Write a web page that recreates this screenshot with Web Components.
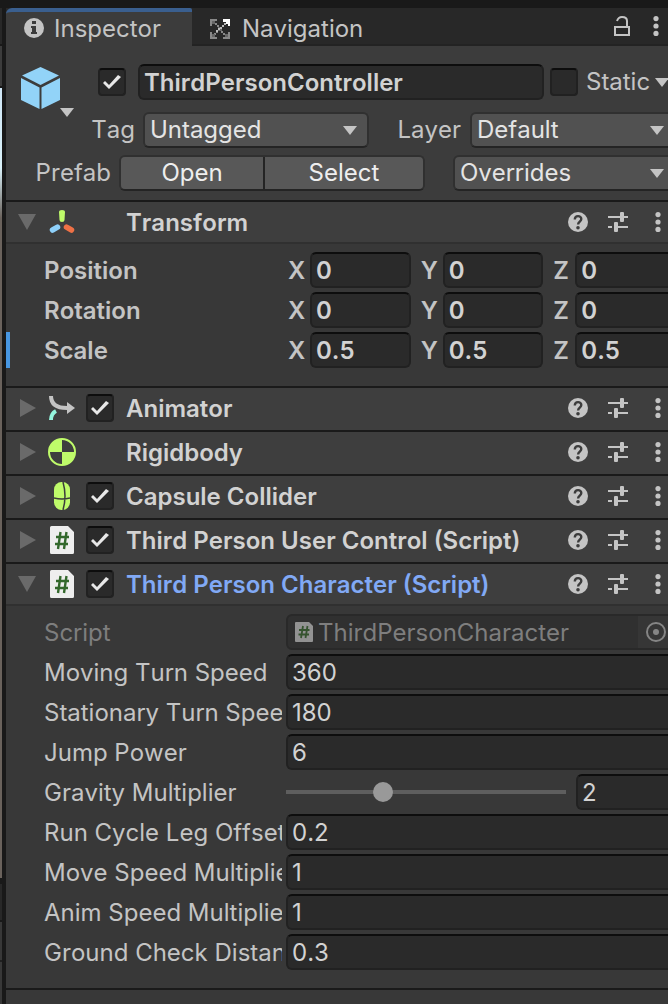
<!DOCTYPE html>
<html lang="en">
<head>
<meta charset="utf-8">
<title>Inspector</title>
<style>
  html, body { margin: 0; min-height: 100%; background: #191919; }
  body {
    display: flex;
    min-height: 100vh;
    overflow: hidden;
    font: 24px/38px Inter, "Liberation Sans", sans-serif;
    font-kerning: none;
    color: #c4c4c4;
  }
</style>
</head>
<body>
<scene-edge></scene-edge>
<inspector-panel>
  <panel-tab slot="tab" icon="info" active>Inspector</panel-tab>
  <panel-tab slot="tab" icon="nav">Navigation</panel-tab>
  <object-header></object-header>
  <component-section name="Transform" icon="transform" open>
    <vector-row label="Position" x="0" y="0" z="0"></vector-row>
    <vector-row label="Rotation" x="0" y="0" z="0"></vector-row>
    <vector-row label="Scale" x="0.5" y="0.5" z="0.5" modified></vector-row>
  </component-section>
  <component-section name="Animator" icon="animator" toggle></component-section>
  <component-section name="Rigidbody" icon="rigidbody"></component-section>
  <component-section name="Capsule Collider" icon="capsule" toggle></component-section>
  <component-section name="Third Person User Control (Script)" icon="script" toggle></component-section>
  <component-section name="Third Person Character (Script)" icon="script" toggle open linked>
    <object-row label="Script" value="ThirdPersonCharacter"></object-row>
    <value-row label="Moving Turn Speed" value="360"></value-row>
    <value-row label="Stationary Turn Speed" value="180"></value-row>
    <value-row label="Jump Power" value="6"></value-row>
    <slider-row label="Gravity Multiplier" value="2" min="1" max="4"></slider-row>
    <value-row label="Run Cycle Leg Offset" value="0.2"></value-row>
    <value-row label="Move Speed Multiplier" value="1"></value-row>
    <value-row label="Anim Speed Multiplier" value="1"></value-row>
    <value-row label="Ground Check Distance" value="0.3"></value-row>
  </component-section>
</inspector-panel>

<script>
const FIELD = `
  *, *::before { box-sizing: border-box; }
  input, button, select { font: inherit; font-kerning: inherit; color: inherit; margin: 0; letter-spacing: inherit; }
  input.text {
    display: block; width: 100%; min-width: 0; height: 36px; padding: 2px 4px 0;
    background: #2a2a2a; color: #d2d2d2;
    border: 2px solid #212121; border-top-color: #0d0d0d; border-radius: 6px; outline: none;
  }
  input.check {
    appearance: none; display: grid; place-items: center; width: 28px; height: 28px; flex: none;
    background: #2a2a2a; border: 2px solid #212121; border-top-color: #0d0d0d; border-radius: 4px;
  }
  input.check:checked::before {
    content: ""; width: 18px; height: 14px; background: #e8e8e8;
    clip-path: polygon(0 8px, 2px 6px, 6px 10px, 15px 0, 18px 2px, 6px 14px);
  }
  button.icon { display: grid; place-items: center; padding: 0; border: 0; background: none; }
  .row { display: grid; grid-template-columns: 238px minmax(0, 1fr); column-gap: 4px; height: 36px; }
  .row > label, .row > .label { overflow: hidden; white-space: nowrap; }
`;

const ICONS = {
  info: [20, 20, `<circle cx="10" cy="10" r="10" fill="#c4c4c4"/><path fill="#3c3c3c" d="M8 3h4v3H8zM7 8h5v6h1v2H7v-2h1v-4H7z"/>`],
  nav: [20, 20, `<g fill="#888"><path d="M0 0h7v2H5v2h2v2h2v2H7V6H5V4H2v3H0zM0 20v-7h2v3h2v-2h2v-2h2v2H6v2H4v2h3v2zM20 20h-7v-2h2v-2h-2v-2h-2v-2h2v2h2v2h3v-3h2z"/><path fill="#666" d="M2 2h3v3H2zM2 15h3v3H2zM15 15h3v3h-3zM8 8h4v4H8z"/></g><path fill="#fff" d="M13 0h7v7h-2V5h-2V3h-3z"/><path fill="#bbb" d="M14 4h2v2h-2v2h-2v2h-2v1H8V9h2V8h2V6h2zM6 11h2v2H6z"/>`],
  lock: [18, 20, `<path fill="none" stroke="#c4c4c4" stroke-width="2" d="M2 11h14v8H2zM14 11V5c0-3-2-4-5-4S5 2 4 5"/>`],
  more: [6, 20, `<g fill="#c4c4c4"><circle cx="3" cy="2.600" r="2.600"/><circle cx="3" cy="10" r="2.600"/><circle cx="3" cy="17.400" r="2.600"/></g>`],
  help: [20, 20, `<circle cx="10" cy="10" r="10" fill="#c4c4c4"/><path d="M6.800 7.600C6.800 3 13.300 3.200 13.300 7c0 2.600-3.200 2.600-3.200 5.500" fill="none" stroke="#3c3c3c" stroke-width="2.400"/><circle cx="10" cy="15.800" r="1.800" fill="#3c3c3c"/>`],
  preset: [20, 20, `<path fill="#c4c4c4" d="M0 4h12V1a1 1 0 0 1 1-1h2a1 1 0 0 1 1 1v3h4v2h-4v3a1 1 0 0 1-1 1h-2a1 1 0 0 1-1-1V6H0zM0 14h4v2H0zM6 11a1 1 0 0 1 1-1h2a1 1 0 0 1 1 1v3h10v2H10v3a1 1 0 0 1-1 1H7a1 1 0 0 1-1-1z"/>`],
  down: [14, 9, `<path fill="#c4c4c4" d="M0 0h14L7 9z"/>`],
  open: [18, 16, `<path fill="#6a6a6a" d="M0 0h18L9 16z"/>`],
  closed: [18, 18, `<path fill="#6a6a6a" d="M2 0v18l16-9z"/>`],
  cube: [40, 42, `<g fill="#92d3f8"><path d="M20.500 0 39 8.500 20.500 18 2 8.500z"/><path d="M1 11l18.500 9.500v21.500L1 33zM40 11l-18.500 9.500v21.500L40 33z"/></g>`],
  transform: [26, 24, `<path fill="#bffb6a" d="M10 2q0-2 3-2t3 2l-.5 8q0 2-2.500 2t-2.500-2z"/><path stroke="#8ed0fa" stroke-width="5.500" stroke-linecap="round" d="M3.500 20l5-2.800"/><path stroke="#ef7146" stroke-width="5.500" stroke-linecap="round" d="M17.500 17.200l5 2.800"/>`],
  animator: [26, 24, `<path d="M2 0c0 8 5 12 16 12" fill="none" stroke="#c4c4c4" stroke-width="4"/><path fill="#c4c4c4" d="M18 6l8 6-8 6z"/><path d="M2 24c0-4 1-7 5-9" fill="none" stroke="#94f5dd" stroke-width="4"/>`],
  rigidbody: [28, 28, `<circle cx="14" cy="14" r="13" fill="none" stroke="#bffb6a" stroke-width="2"/><path fill="#bffb6a" d="M14 14V1A13 13 0 0 0 1 14zM14 14h13a13 13 0 0 1-13 13z"/>`],
  capsule: [16, 28, `<rect width="16" height="28" rx="7.500" fill="#bffb6a"/><path d="M0 16q8 2 16 0M9 0q4 14 0 28" fill="none" stroke="#3c3c3c" stroke-width="1.500"/>`],
  script: [24, 28, `<path fill="#eee" d="M1.500 0H18l6 6v20.500a1.500 1.500 0 0 1-1.500 1.500h-21A1.500 1.500 0 0 1 0 26.500v-25A1.500 1.500 0 0 1 1.500 0z"/><path d="M10.500 6l-2.500 17M16.500 6 14 23M6 11h13M5 18h13" stroke="#33682c" stroke-width="2.400"/>`],
  scriptDim: [18, 20, `<path fill="#929292" d="M1 0h13l4 4v15a1 1 0 0 1-1 1H1a1 1 0 0 1-1-1V1a1 1 0 0 1 1-1z"/><path d="M8 4 6 16M12.500 4l-2 12M4 8h10.500M3.500 12.500H14" stroke="#35532f" stroke-width="1.800"/>`],
  picker: [20, 20, `<circle cx="10" cy="10" r="9" fill="none" stroke="#858585" stroke-width="2"/><circle cx="10" cy="10" r="3" fill="#858585"/>`]
};

class BaseElement extends HTMLElement {
  connectedCallback() {
    if (this.shadowRoot) return;
    this.attachShadow({ mode: "open" }).innerHTML = `<style>${FIELD}</style>` + this.render();
  }
  attr(name) { return this.getAttribute(name) || ""; }
}

customElements.define("ui-icon", class extends HTMLElement {
  connectedCallback() {
    if (this.shadowRoot) return;
    const [w, h, shape] = ICONS[this.getAttribute("name")];
    this.attachShadow({ mode: "open" }).innerHTML = `
      <style>:host { display: block; flex: none; line-height: 0; } svg { display: block; }</style>
      <svg width="${w}" height="${h}" viewBox="0 0 ${w} ${h}" fill="none" aria-hidden="true">${shape}</svg>`;
  }
});

customElements.define("scene-edge", class extends BaseElement {
  render() {
    return `<style>
      :host { display: flex; flex-direction: column; flex: none; width: 2px; margin-right: 4px; }
      .bar { height: 80px; margin-top: 8px; background: linear-gradient(#282828 36px, #191919 36px, #191919 38px, #3c3c3c 38px, #3c3c3c 78px, #191919 78px); }
      .view { height: 790px; background: linear-gradient(#cfe6f6, #d8f0f8 80px, #6a625c 130px, #6a625c); }
      .dock { flex: 1; background: linear-gradient(#282828 36px, #191919 36px, #191919 38px, #383838 38px, #383838 76px, #202020 76px, #202020 78px, #383838 78px); margin-top: 6px; }
    </style><div class="bar"></div><div class="view"></div><div class="dock"></div>`;
  }
});

customElements.define("inspector-panel", class extends BaseElement {
  render() {
    return `<style>
      :host { display: flex; flex-direction: column; flex: 1; min-width: 0; margin-right: -8px; background: #383838; }
      .tabs { display: flex; height: 46px; border-top: 8px solid #191919;
        background: linear-gradient(#282828 36px, #232323 36px); }
      .tools { display: flex; align-items: center; gap: 22px; margin-left: auto; padding: 0 17px 2px 0; }
    </style>
    <nav class="tabs"><slot name="tab"></slot>
      <div class="tools">
        <button class="icon" aria-label="Lock"><ui-icon name="lock"></ui-icon></button>
        <button class="icon" aria-label="Menu"><ui-icon name="more"></ui-icon></button>
      </div>
    </nav>
    <slot></slot>`;
  }
});

customElements.define("panel-tab", class extends BaseElement {
  render() {
    return `<style>
      :host { display: flex; }
      button { display: flex; align-items: center; gap: 12px; height: 38px; padding: 4px 18px 0; border: 0; background: none; line-height: 34px; }
      :host([active]) button { gap: 10px; width: 186px; padding-top: 0; border-top: 4px solid #3a5f8f; border-radius: 6px 2px 0 0; background: #3c3c3c; }
      :host([active]) ui-icon { margin-bottom: 2px; }
    </style>
    <button><ui-icon name="${this.attr("icon")}"></ui-icon><slot></slot></button>`;
  }
});

customElements.define("drop-down", class extends BaseElement {
  render() {
    return `<style>
      :host { display: grid; min-width: 0; align-items: center; }
      select, ui-icon { grid-area: 1 / 1; }
      select { appearance: none; width: 100%; height: 36px; padding: 0 5px; background: #515151; color: #e4e4e4;
        border: 2px solid #303030; border-bottom-color: #242424; border-radius: 6px; line-height: 32px; outline: none; }
      ui-icon { justify-self: end; margin-right: 12px; pointer-events: none; }
    </style>
    <select aria-label="${this.attr("label")}"><option>${this.attr("value")}</option></select>
    <ui-icon name="down"></ui-icon>`;
  }
});

customElements.define("object-header", class extends BaseElement {
  render() {
    return `<style>
      :host { display: flex; flex-direction: column; height: 154px; background: #3c3c3c; padding: 18px 0 0 14px; box-sizing: border-box; }
      .line { display: flex; align-items: center; height: 36px; }
      .cube { display: flex; align-items: flex-end; height: 54px; width: 54px; margin-bottom: -18px; }
      .cube ui-icon:first-child { margin-bottom: 9px; }
      .cube ui-icon:last-child { margin-bottom: 1px; }
      .enabled { margin-left: 24px; }
      .name { flex: 1; margin: 0 6px 0 12px; font-weight: 600; }
      .static { display: flex; align-items: center; gap: 5px; width: 90px; margin-left: 8px; }
      .second { margin-top: 12px; }
      .third { display: grid; grid-template-columns: 99px minmax(0, 306fr) minmax(0, 251fr); margin-top: 6px; }
      .tag { flex: none; width: 123px; padding-right: 8px; text-align: right; }
      .untagged { flex: 226; }
      .layer { flex: none; width: 101px; padding-right: 9px; text-align: right; }
      .default { flex: 206; }
      .prefab { padding-right: 8px; text-align: right; }
      .pair { display: grid; grid-template-columns: 142fr 160fr; height: 36px; border: 2px solid #303030; border-bottom-color: #242424; border-radius: 6px; overflow: hidden; }
      .pair button { border: 0; padding: 0; background: #585858; color: #eee; line-height: 32px; }
      .pair button + button { border-left: 2px solid #242424; }
      .overrides { margin-left: 28px; }
    </style>
    <div class="line">
      <div class="cube"><ui-icon name="cube"></ui-icon><ui-icon name="down"></ui-icon></div>
      <input class="check enabled" type="checkbox" checked aria-label="Enabled">
      <input class="text name" value="ThirdPersonController" aria-label="Name">
      <input class="check" id="static" type="checkbox">
      <label class="static" for="static">Static<ui-icon name="down"></ui-icon></label>
    </div>
    <div class="line second">
      <span class="tag">Tag</span><drop-down class="untagged" label="Tag" value="Untagged"></drop-down>
      <span class="layer">Layer</span><drop-down class="default" label="Layer" value="Default"></drop-down>
    </div>
    <div class="line third">
      <span class="prefab">Prefab</span>
      <div class="pair"><button>Open</button><button>Select</button></div>
      <drop-down class="overrides" label="Overrides" value="Overrides"></drop-down>
    </div>`;
  }
});

customElements.define("component-section", class extends BaseElement {
  render() {
    const open = this.hasAttribute("open");
    return `<style>
      :host { display: block; border-top: 2px solid #1a1a1a; }
      :host(:last-of-type) { border-bottom: 2px solid #1a1a1a; }
      header { display: grid; grid-template-columns: 20px 28px 28px minmax(0, 1fr) auto; column-gap: 10px; align-items: center;
        height: 42px; padding: 0 15px 2px 12px; background: #3e3e3e; }
      :host([open]) header { border-bottom: 2px solid #303030; padding-bottom: 0; }
      header > .icon { justify-self: start; }
      header > .kind { justify-self: center; }
      h2 { margin: 0 0 0 2px; grid-column: 4; font-size: 24px; font-weight: 600; color: #d2d2d2; white-space: nowrap; line-height: 36px; padding-top: 2px; }
      :host([linked]) h2 { color: #81a9f5; }
      .tools { display: flex; grid-column: 5; gap: 20px; }
      .tools button:last-child { margin-left: 7px; }
      .body { display: flex; flex-direction: column; gap: 4px; padding: 8px 0 18px; }
    </style>
    <header>
      <button class="icon" aria-label="Expand"><ui-icon name="${open ? "open" : "closed"}"></ui-icon></button>
      <ui-icon class="kind" name="${this.attr("icon")}"></ui-icon>
      ${this.hasAttribute("toggle") ? `<input class="check" type="checkbox" checked aria-label="Enabled">` : ""}
      <h2>${this.attr("name")}</h2>
      <div class="tools">
        <button class="icon" aria-label="Help"><ui-icon name="help"></ui-icon></button>
        <button class="icon" aria-label="Presets"><ui-icon name="preset"></ui-icon></button>
        <button class="icon" aria-label="Menu"><ui-icon name="more"></ui-icon></button>
      </div>
    </header>
    ${open ? `<div class="body"><slot></slot></div>` : ""}`;
  }
});

customElements.define("vector-row", class extends BaseElement {
  render() {
    const axis = k => `<label class="axis"><span>${k.toUpperCase()}</span><input class="text" value="${this.attr(k)}"></label>`;
    return `<style>
      :host { display: block; font-weight: 600; padding-left: 38px; }
      :host([modified]) { border-left: 4px solid #4897e2; padding-left: 34px; }
      .axes { display: grid; grid-template-columns: repeat(3, minmax(0, 1fr)); gap: 10px; padding-left: 2px; }
      .axis { display: grid; grid-template-columns: 22px minmax(0, 1fr); height: 36px; }
    </style>
    <div class="row"><span class="label">${this.attr("label")}</span>
      <div class="axes">${axis("x")}${axis("y")}${axis("z")}</div></div>`;
  }
});

customElements.define("value-row", class extends BaseElement {
  render() {
    return `<style>:host { display: block; padding-left: 38px; }</style>
    <div class="row"><label for="v">${this.attr("label")}</label><input class="text" id="v" value="${this.attr("value")}"></div>`;
  }
});

customElements.define("slider-row", class extends BaseElement {
  render() {
    return `<style>
      :host { display: block; padding-left: 38px; }
      .pair { display: grid; grid-template-columns: minmax(0, 1fr) 100px; gap: 10px; align-items: center; height: 36px; }
      input[type=range] { appearance: none; width: 100%; height: 20px; background: linear-gradient(#5e5e5e, #5e5e5e) center / 100% 4px no-repeat; }
      input[type=range]::-webkit-slider-thumb { appearance: none; width: 20px; height: 20px; border-radius: 50%; background: #999; }
    </style>
    <div class="row"><label for="v">${this.attr("label")}</label>
      <div class="pair">
        <input id="v" type="range" min="${this.attr("min")}" max="${this.attr("max")}" value="${this.attr("value")}">
        <input class="text" value="${this.attr("value")}" aria-label="${this.attr("label")}">
      </div></div>`;
  }
});

customElements.define("object-row", class extends BaseElement {
  render() {
    return `<style>
      :host { display: block; padding-left: 38px; color: #7e7e7e; }
      .box { display: flex; align-items: center; border: 2px solid #292929; border-radius: 6px; background: #303030; padding-left: 7px; height: 36px; }
      input { flex: 1; min-width: 0; padding: 2px 0 0 5px; border: 0; background: none; height: 32px; outline: none; }
      button.icon { width: 36px; height: 32px; background: #363636; }
    </style>
    <div class="row"><label for="v">${this.attr("label")}</label>
      <div class="box"><ui-icon name="scriptDim"></ui-icon><input id="v" value="${this.attr("value")}" readonly>
      <button class="icon" aria-label="Pick"><ui-icon name="picker"></ui-icon></button></div></div>`;
  }
});
</script>
</body>
</html>
